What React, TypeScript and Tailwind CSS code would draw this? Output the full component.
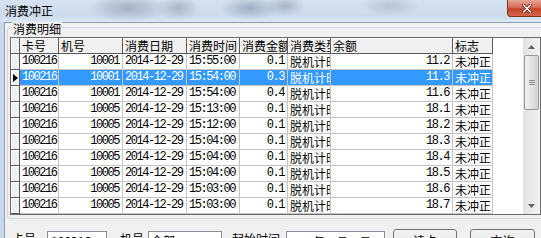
import React from 'react';

type Row = {
  card: string;
  machine: string;
  date: string;
  time: string;
  amount: string;
  kind: string;
  balance: string;
  flag: string;
};

const rows: Row[] = [
  { card: '100216', machine: '10001', date: '2014-12-29', time: '15:55:00', amount: '0.1', kind: '脱机计时', balance: '11.2', flag: '未冲正' },
  { card: '100216', machine: '10001', date: '2014-12-29', time: '15:54:00', amount: '0.3', kind: '脱机计时', balance: '11.3', flag: '未冲正' },
  { card: '100216', machine: '10001', date: '2014-12-29', time: '15:54:00', amount: '0.4', kind: '脱机计时', balance: '11.6', flag: '未冲正' },
  { card: '100216', machine: '10005', date: '2014-12-29', time: '15:13:00', amount: '0.1', kind: '脱机计时', balance: '18.1', flag: '未冲正' },
  { card: '100216', machine: '10005', date: '2014-12-29', time: '15:12:00', amount: '0.1', kind: '脱机计时', balance: '18.2', flag: '未冲正' },
  { card: '100216', machine: '10005', date: '2014-12-29', time: '15:04:00', amount: '0.1', kind: '脱机计时', balance: '18.3', flag: '未冲正' },
  { card: '100216', machine: '10005', date: '2014-12-29', time: '15:04:00', amount: '0.1', kind: '脱机计时', balance: '18.4', flag: '未冲正' },
  { card: '100216', machine: '10005', date: '2014-12-29', time: '15:04:00', amount: '0.1', kind: '脱机计时', balance: '18.5', flag: '未冲正' },
  { card: '100216', machine: '10005', date: '2014-12-29', time: '15:03:00', amount: '0.1', kind: '脱机计时', balance: '18.6', flag: '未冲正' },
  { card: '100216', machine: '10005', date: '2014-12-29', time: '15:03:00', amount: '0.1', kind: '脱机计时', balance: '18.7', flag: '未冲正' },
];

// column widths include the 1px grid line on the right
const cols: { key: keyof Row; title: string; w: string; right?: boolean; cjk?: boolean }[] = [
  { key: 'card', title: '卡号', w: 'w-[39px]' },
  { key: 'machine', title: '机号', w: 'w-[64px]', right: true },
  { key: 'date', title: '消费日期', w: 'w-[64px]' },
  { key: 'time', title: '消费时间', w: 'w-[53px]' },
  { key: 'amount', title: '消费金额', w: 'w-[48px]', right: true },
  { key: 'kind', title: '消费类型', w: 'w-[43px]', cjk: true },
  { key: 'balance', title: '余额', w: 'w-[122px]', right: true },
  { key: 'flag', title: '标志', w: 'w-[40px]', cjk: true },
];

const MONO = "font-['Liberation_Mono','Noto_Sans_CJK_SC',monospace] tracking-[-1.45px]";
const CJK = "font-['Noto_Sans_CJK_SC',sans-serif]";

function TitleBar() {
  return (
    <div className="flex h-[22px] items-start justify-between bg-[radial-gradient(ellipse_40px_14px_at_128px_8px,#a3b1c2,transparent),radial-gradient(ellipse_22px_12px_at_178px_8px,#a9b7c7,transparent),radial-gradient(ellipse_30px_12px_at_250px_8px,#9fafc1,transparent),radial-gradient(ellipse_20px_10px_at_285px_6px,#a6b4c5,transparent),radial-gradient(ellipse_30px_10px_at_390px_6px,#b5c3d3,transparent),linear-gradient(180deg,#d6e2ef_0%,#cbdaeb_70%,#dce7f3_100%)]">
      <span className={`${CJK} pl-[5px] pt-[3px] text-[12px] leading-[16px] text-black`}>消费冲正</span>
      <div className="-mr-[6px] flex h-[17px] w-[40px] items-center justify-center rounded-b-[4px] border border-t-0 border-[#7a3528] bg-[linear-gradient(180deg,#e8a595_0%,#d66f5a_45%,#c4432b_55%,#d8664e_100%)]">
        <svg width="10" height="9" viewBox="0 0 10 9">
          <path d="M1.5 1 L8.5 8 M8.5 1 L1.5 8" stroke="#5a1a10" strokeWidth="3" strokeLinecap="round" />
          <path d="M1.5 1 L8.5 8 M8.5 1 L1.5 8" stroke="#ffffff" strokeWidth="1.6" strokeLinecap="round" />
        </svg>
      </div>
    </div>
  );
}

function Scrollbar() {
  return (
    <div className="flex w-[17px] flex-col bg-[linear-gradient(90deg,#e2e2e2,#f2f2f2)]">
      <div className="flex h-[17px] items-center justify-center">
        <svg width="7" height="4" viewBox="0 0 7 4">
          <path d="M0 4 L3.5 0 L7 4 Z" fill="#606060" />
        </svg>
      </div>
      <div className="mx-[1px] flex h-[55px] flex-col items-center justify-center gap-[1px] rounded-[2px] border border-[#989898] bg-[linear-gradient(90deg,#f3f3f3,#e2e2e2_50%,#d3d3d3)]">
        <div className="h-[1px] w-[6px] bg-[#8a8a8a]" />
        <div className="h-[1px] w-[6px] bg-[#8a8a8a]" />
        <div className="h-[1px] w-[6px] bg-[#8a8a8a]" />
      </div>
      <div className="flex-1" />
      <div className="flex h-[17px] items-center justify-center">
        <svg width="7" height="4" viewBox="0 0 7 4">
          <path d="M0 0 L3.5 4 L7 0 Z" fill="#606060" />
        </svg>
      </div>
    </div>
  );
}

function Grid() {
  return (
    <div className="flex h-[178px] w-[531px] border border-[#6a6a6a] bg-white text-[12px] leading-[15px]">
      <div className="flex w-[512px] flex-col">
        <div className="flex h-[16px]">
          <div className="h-full w-[9px] border-r border-b border-[#5a5a5a] bg-[#f0f0f0] shadow-[inset_1px_1px_0_#ffffff]" />
          {cols.map((c) => (
            <div
              key={c.key}
              className={`${c.w} ${CJK} h-full overflow-hidden whitespace-nowrap border-r border-b border-[#5a5a5a] bg-[#f0f0f0] pl-[2px] shadow-[inset_1px_1px_0_#ffffff]`}
            >
              {c.title}
            </div>
          ))}
          <div className="flex-1" />
        </div>
        {rows.map((r, i) => {
          const sel = i === 1;
          return (
            <div key={i} className="flex h-[16px]">
              <div className="flex h-full w-[9px] items-center justify-center border-r border-b border-[#5a5a5a] bg-[#f0f0f0] shadow-[inset_1px_1px_0_#ffffff]">
                {sel && (
                  <svg width="5" height="8" viewBox="0 0 5 8">
                    <path d="M0 0 L5 4 L0 8 Z" fill="#000000" />
                  </svg>
                )}
              </div>
              {cols.map((c) => (
                <div
                  key={c.key}
                  className={`${c.w} ${c.cjk ? CJK : MONO} h-full overflow-hidden whitespace-nowrap border-r border-b border-[#c4c4c4] ${
                    c.right ? 'pr-[3px] text-right' : 'pl-[2px]'
                  } ${sel ? 'bg-[#3399ff] text-white' : 'text-black'}`}
                >
                  {r[c.key]}
                </div>
              ))}
              <div className="flex-1" />
            </div>
          );
        })}
      </div>
      <Scrollbar />
    </div>
  );
}

function BottomBar() {
  return (
    <div className={`${CJK} mt-[10px] flex items-start text-[12px] leading-[16px] text-black`}>
      <div className="ml-[5px] w-[35px] pt-[2px]">卡号</div>
      <div className="mt-[2px] h-[21px] w-[60px] border border-[#8a8d94] bg-white pl-[3px] pt-[1px]">100216</div>
      <div className="ml-[13px] w-[28px] pt-[2px]">机号</div>
      <div className="mt-[2px] h-[21px] w-[74px] border border-[#8a8d94] bg-white pl-[2px] pt-[1px]">全部</div>
      <div className="ml-[10px] w-[54px] pt-[2px]">起始时间</div>
      <div className="mt-[2px] h-[21px] w-[99px] border border-[#8a8d94] bg-white pl-[2px] pt-[1px] text-[11px]">2014年12月29日</div>
      <div className="ml-[8px] flex h-[23px] w-[64px] justify-center rounded-[3px] border border-[#707070] bg-[linear-gradient(180deg,#f2f2f2_0%,#ebebeb_50%,#dddddd_51%,#cfcfcf_100%)] pt-[3px]">
        读卡
      </div>
      <div className="ml-[13px] flex h-[23px] w-[65px] justify-center rounded-[3px] border border-[#707070] bg-[linear-gradient(180deg,#f2f2f2_0%,#ebebeb_50%,#dddddd_51%,#cfcfcf_100%)] pt-[3px]">
        查询
      </div>
    </div>
  );
}

export default function App() {
  return (
    <div className="h-[238px] w-[541px] overflow-hidden bg-[#c8d8ea]">
      <TitleBar />
      <div className="ml-[4px] h-[216px] border-l border-t border-[#8c9fb6] bg-[#f0f0f0] pl-[2px] pt-[4px]">
        <div className="relative h-[192px] w-[560px] rounded-[3px] border border-[#d0d7de] pl-[2px] pt-[9px]">
          <span className={`${CJK} absolute -top-[6px] left-[4px] bg-[#f0f0f0] px-[1px] text-[12px] leading-[14px] text-black`}>
            消费明细
          </span>
          <Grid />
        </div>
        <BottomBar />
      </div>
    </div>
  );
}
